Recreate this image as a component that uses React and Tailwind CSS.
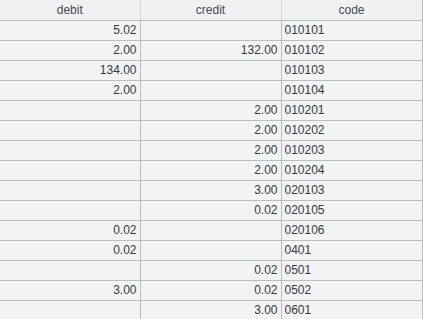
import React from "react";

const rows = [
  ["5.02", "", "010101"],
  ["2.00", "132.00", "010102"],
  ["134.00", "", "010103"],
  ["2.00", "", "010104"],
  ["", "2.00", "010201"],
  ["", "2.00", "010202"],
  ["", "2.00", "010203"],
  ["", "2.00", "010204"],
  ["", "3.00", "020103"],
  ["", "0.02", "020105"],
  ["0.02", "", "020106"],
  ["0.02", "", "0401"],
  ["", "0.02", "0501"],
  ["3.00", "0.02", "0502"],
  ["", "3.00", "0601"],
];

export default function App() {
  return (
    <div className="h-[319px] w-[423px] overflow-hidden bg-[#f2f3f3] font-['Liberation_Sans',Arial,sans-serif] text-[12px] text-[#363a40]">
      <table className="w-[422px] table-fixed border-collapse">
        <colgroup>
          <col className="w-[140px]" />
          <col className="w-[141px]" />
          <col className="w-[141px]" />
        </colgroup>
        <thead>
          <tr className="h-[20px] bg-[#eff1f2] text-[#444a52]">
            <th className="border-b border-r border-b-[#b8bfc5] border-r-[#d3d8db] font-normal leading-none">debit</th>
            <th className="border-b border-r border-b-[#b8bfc5] border-r-[#d3d8db] font-normal leading-none">credit</th>
            <th className="border-b border-r border-b-[#b8bfc5] border-r-[#b8bfc5] font-normal leading-none">code</th>
          </tr>
        </thead>
        <tbody>
          {rows.map((r, i) => (
            <tr key={i} className="h-[20px]">
              <td className="border-b border-r border-[#b8bfc5] px-[3px] text-right leading-none">{r[0]}</td>
              <td className="border-b border-r border-[#b8bfc5] px-[3px] text-right leading-none">{r[1]}</td>
              <td className="border-b border-r border-[#b8bfc5] px-[3px] text-left leading-none">{r[2]}</td>
            </tr>
          ))}
        </tbody>
      </table>
    </div>
  );
}
